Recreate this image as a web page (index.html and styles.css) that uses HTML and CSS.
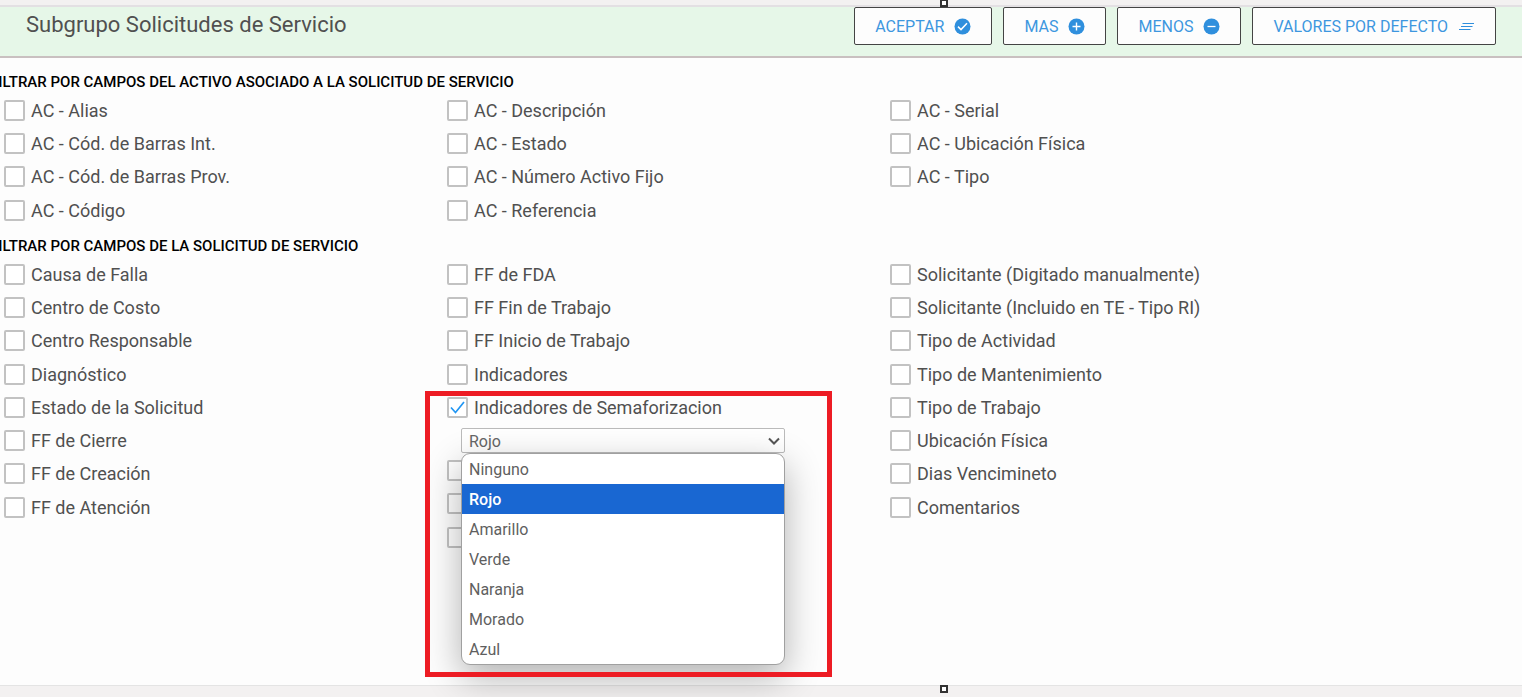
FILE: index.html
```html
<!DOCTYPE html>
<html lang="es">
<head>
  <meta charset="UTF-8" />
  <meta name="viewport" content="width=device-width, initial-scale=1.0"/>
  <title>Subgrupo Solicitudes de Servicio</title>
  <link rel="stylesheet" href="styles.css">
</head>
<body>

<div class="strip strip-top"><span class="handle"></span></div>

<header class="toolbar">
  <h1>Subgrupo Solicitudes de Servicio</h1>
  <div class="actions">
    <button type="button" class="btn">ACEPTAR
      <svg class="icon" viewBox="0 0 17 17"><circle cx="8.500" cy="8.500" r="8" fill="#2f8fdd"/><path d="M4 8.600l3 3 6-6.400" fill="none" stroke="#fff" stroke-width="1.500"/></svg>
    </button>
    <button type="button" class="btn">MAS
      <svg class="icon" viewBox="0 0 17 17"><circle cx="8.500" cy="8.500" r="8" fill="#2f8fdd"/><path d="M4.500 8.500h8M8.500 4.500v8" fill="none" stroke="#fff" stroke-width="1.400"/></svg>
    </button>
    <button type="button" class="btn">MENOS
      <svg class="icon" viewBox="0 0 17 17"><circle cx="8.500" cy="8.500" r="8" fill="#2f8fdd"/><path d="M4.500 8.500h8" fill="none" stroke="#fff" stroke-width="1.300"/></svg>
    </button>
    <button type="button" class="btn">VALORES POR DEFECTO
      <svg class="icon" viewBox="0 0 17 17"><path d="M4.500 5.500h11.500M3 8.500h11.500M1 11.500h11.500" fill="none" stroke="#2f8fdd" stroke-width="1.200"/></svg>
    </button>
  </div>
</header>

<main class="filters">
  <section class="group">
    <h2>FILTRAR POR CAMPOS DEL ACTIVO ASOCIADO A LA SOLICITUD DE SERVICIO</h2>
    <div class="columns">
      <ul>
        <li><label><input type="checkbox"> AC - Alias</label></li>
        <li><label><input type="checkbox"> AC - Cód. de Barras Int.</label></li>
        <li><label><input type="checkbox"> AC - Cód. de Barras Prov.</label></li>
        <li><label><input type="checkbox"> AC - Código</label></li>
      </ul>
      <ul>
        <li><label><input type="checkbox"> AC - Descripción</label></li>
        <li><label><input type="checkbox"> AC - Estado</label></li>
        <li><label><input type="checkbox"> AC - Número Activo Fijo</label></li>
        <li><label><input type="checkbox"> AC - Referencia</label></li>
      </ul>
      <ul>
        <li><label><input type="checkbox"> AC - Serial</label></li>
        <li><label><input type="checkbox"> AC - Ubicación Física</label></li>
        <li><label><input type="checkbox"> AC - Tipo</label></li>
      </ul>
    </div>
  </section>

  <section class="group">
    <h2>FILTRAR POR CAMPOS DE LA SOLICITUD DE SERVICIO</h2>
    <div class="columns">
      <ul>
        <li><label><input type="checkbox"> Causa de Falla</label></li>
        <li><label><input type="checkbox"> Centro de Costo</label></li>
        <li><label><input type="checkbox"> Centro Responsable</label></li>
        <li><label><input type="checkbox"> Diagnóstico</label></li>
        <li><label><input type="checkbox"> Estado de la Solicitud</label></li>
        <li><label><input type="checkbox"> FF de Cierre</label></li>
        <li><label><input type="checkbox"> FF de Creación</label></li>
        <li><label><input type="checkbox"> FF de Atención</label></li>
      </ul>
      <ul>
        <li><label><input type="checkbox"> FF de FDA</label></li>
        <li><label><input type="checkbox"> FF Fin de Trabajo</label></li>
        <li><label><input type="checkbox"> FF Inicio de Trabajo</label></li>
        <li><label><input type="checkbox"> Indicadores</label></li>
        <li class="open">
          <label><input type="checkbox" checked> Indicadores de Semaforizacion</label>
          <div class="dropdown">
            <select aria-label="Indicadores de Semaforizacion">
              <option>Ninguno</option>
              <option selected>Rojo</option>
              <option>Amarillo</option>
              <option>Verde</option>
              <option>Naranja</option>
              <option>Morado</option>
              <option>Azul</option>
            </select>
            <svg class="chevron" viewBox="0 0 12 8"><path d="M1 1.500l5 5 5-5" fill="none" stroke="#555" stroke-width="2"/></svg>
            <div class="menu" role="listbox">
              <div role="option">Ninguno</div>
              <div role="option" class="selected" aria-selected="true">Rojo</div>
              <div role="option">Amarillo</div>
              <div role="option">Verde</div>
              <div role="option">Naranja</div>
              <div role="option">Morado</div>
              <div role="option">Azul</div>
            </div>
          </div>
          <div class="highlight"></div>
        </li>
        <li><input type="checkbox" aria-label="Filtro 6"></li>
        <li><input type="checkbox" aria-label="Filtro 7"></li>
        <li><input type="checkbox" aria-label="Filtro 8"></li>
      </ul>
      <ul>
        <li><label><input type="checkbox"> Solicitante (Digitado manualmente)</label></li>
        <li><label><input type="checkbox"> Solicitante (Incluido en TE - Tipo RI)</label></li>
        <li><label><input type="checkbox"> Tipo de Actividad</label></li>
        <li><label><input type="checkbox"> Tipo de Mantenimiento</label></li>
        <li><label><input type="checkbox"> Tipo de Trabajo</label></li>
        <li><label><input type="checkbox"> Ubicación Física</label></li>
        <li><label><input type="checkbox"> Dias Vencimineto</label></li>
        <li><label><input type="checkbox"> Comentarios</label></li>
      </ul>
    </div>
  </section>
</main>

<div class="strip strip-bottom"><span class="handle"></span></div>

</body>
</html>
```
FILE: styles.css
```css
* {
  box-sizing: border-box;
}

body {
  margin: 0;
  min-height: 100vh;
  display: flex;
  flex-direction: column;
  background-color: #fdfdfd;
  color: #505050;
  font-family: Roboto, Arial, sans-serif;
  font-size: 18px;
  overflow: hidden;
}

.strip {
  position: relative;
  height: 7px;
  background-color: #f3f1f1;
}

.strip-top {
  border-bottom: 2px solid #e3e0e3;
}

.strip-bottom {
  height: 12px;
  border-top: 1px solid #e4e4e4;
}

.handle {
  position: absolute;
  left: 62%;
  top: -1px;
  width: 8px;
  height: 8px;
  margin-left: -4px;
  border: 2px solid #333;
  background-color: #fff;
}

.toolbar {
  display: flex;
  justify-content: space-between;
  align-items: flex-start;
  height: 51px;
  padding: 0 26px;
  background-color: #e6f7e8;
  border-bottom: 2px solid #c9c0c0;
}

h1 {
  margin: 0;
  font-size: 22px;
  line-height: 36px;
  font-weight: 400;
}

.actions {
  display: flex;
  gap: 11px;
}

.btn {
  display: flex;
  align-items: center;
  gap: 10px;
  height: 38px;
  padding: 0 20px;
  border: 1px solid #444;
  border-radius: 2px;
  background-color: #fdfdfd;
  color: #3d97df;
  font-family: inherit;
  font-size: 16px;
  cursor: pointer;
}

.icon {
  width: 17px;
  height: 17px;
}

.filters {
  flex: 1;
  padding-top: 13px;
}

.group {
  margin-bottom: 8px;
}

h2 {
  margin: 0 0 0 -10px;
  color: #000;
  font-size: 15px;
  line-height: 23px;
  font-weight: 500;
  white-space: nowrap;
}

.columns {
  display: grid;
  grid-template-columns: repeat(3, 1fr);
  padding: 0 189px 0 4px;
}

ul {
  display: grid;
  grid-auto-rows: minmax(33px, auto) 33px 33px 34px;
  align-content: start;
  margin: 0;
  padding: 0;
  list-style: none;
}

li {
  display: flex;
  flex-direction: column;
  justify-content: center;
}

label {
  display: flex;
  align-items: center;
  gap: 6px;
  line-height: 33px;
  white-space: nowrap;
}

input[type="checkbox"] {
  appearance: none;
  flex: none;
  width: 21px;
  height: 21px;
  margin: 0;
  border: 2px solid #c2c2c2;
  border-radius: 2px;
  background-color: #fff;
}

input[type="checkbox"]:checked {
  background: url("data:image/svg+xml,%3Csvg xmlns='http://www.w3.org/2000/svg' viewBox='0 0 17 17'%3E%3Cpath d='M2 8.500l4.500 5L15 3' fill='none' stroke='%232196f3' stroke-width='1.700'/%3E%3C/svg%3E") #fff;
}

.open {
  position: relative;
}

.dropdown {
  position: relative;
  width: 324px;
  margin: 4px 0 1px 14px;
}

select {
  appearance: none;
  display: block;
  width: 100%;
  height: 25px;
  padding: 2px 7px 0;
  border: 1px solid #bbb;
  border-radius: 2px;
  background-color: #fff;
  color: #666;
  font-family: inherit;
  font-size: 16px;
}

.chevron {
  position: absolute;
  right: 5px;
  top: 9px;
  width: 12px;
  height: 8px;
}

.menu {
  position: absolute;
  z-index: 1;
  top: 100%;
  left: 0;
  width: 100%;
  overflow: hidden;
  border: 1px solid #a0a0a0;
  border-radius: 9px;
  background-color: #fff;
  box-shadow: 0 12px 36px rgba(0, 0, 0, 0.3);
  color: #5f5f5f;
  font-size: 16px;
  line-height: 28px;
}

.menu div {
  padding: 2px 7px 0;
}

.menu .selected {
  background-color: #1967d2;
  color: #fff;
  font-weight: 500;
}

.highlight {
  position: absolute;
  z-index: 2;
  top: 0;
  left: -22px;
  width: 407px;
  height: 286px;
  border: 5px solid #ed1c24;
  pointer-events: none;
}
```
